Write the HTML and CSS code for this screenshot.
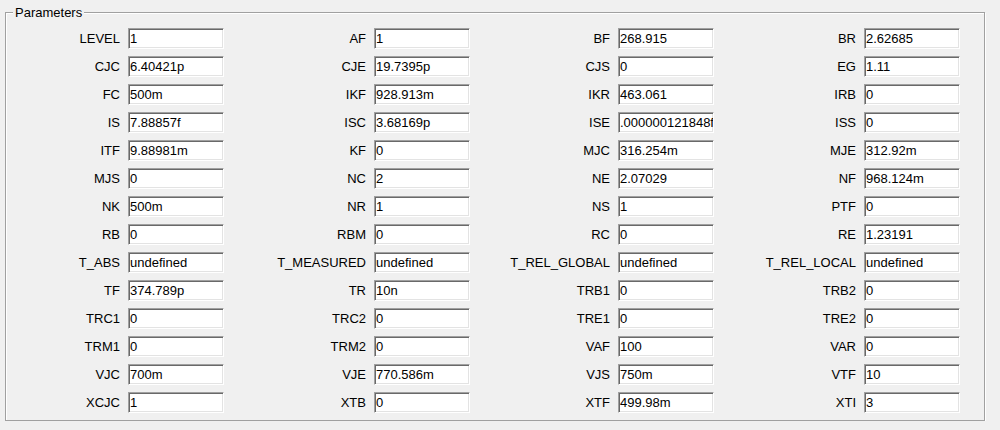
FILE: index.html
```html
<!DOCTYPE html>
<html lang="en">
<head>
<meta charset="UTF-8" />
<title>Parameters</title>
<link rel="stylesheet" href="styles.css">
</head>
<body>
  <div class="group">
    <span class="legend">Parameters</span>
    <div class="params">
      <label>LEVEL</label><input value="1">
      <label>AF</label><input value="1">
      <label>BF</label><input value="268.915">
      <label>BR</label><input value="2.62685">

      <label>CJC</label><input value="6.40421p">
      <label>CJE</label><input value="19.7395p">
      <label>CJS</label><input value="0">
      <label>EG</label><input value="1.11">

      <label>FC</label><input value="500m">
      <label>IKF</label><input value="928.913m">
      <label>IKR</label><input value="463.061">
      <label>IRB</label><input value="0">

      <label>IS</label><input value="7.88857f">
      <label>ISC</label><input value="3.68169p">
      <label>ISE</label><input value=".000000121848f">
      <label>ISS</label><input value="0">

      <label>ITF</label><input value="9.88981m">
      <label>KF</label><input value="0">
      <label>MJC</label><input value="316.254m">
      <label>MJE</label><input value="312.92m">

      <label>MJS</label><input value="0">
      <label>NC</label><input value="2">
      <label>NE</label><input value="2.07029">
      <label>NF</label><input value="968.124m">

      <label>NK</label><input value="500m">
      <label>NR</label><input value="1">
      <label>NS</label><input value="1">
      <label>PTF</label><input value="0">

      <label>RB</label><input value="0">
      <label>RBM</label><input value="0">
      <label>RC</label><input value="0">
      <label>RE</label><input value="1.23191">

      <label>T_ABS</label><input value="undefined">
      <label>T_MEASURED</label><input value="undefined">
      <label>T_REL_GLOBAL</label><input value="undefined">
      <label>T_REL_LOCAL</label><input value="undefined">

      <label>TF</label><input value="374.789p">
      <label>TR</label><input value="10n">
      <label>TRB1</label><input value="0">
      <label>TRB2</label><input value="0">

      <label>TRC1</label><input value="0">
      <label>TRC2</label><input value="0">
      <label>TRE1</label><input value="0">
      <label>TRE2</label><input value="0">

      <label>TRM1</label><input value="0">
      <label>TRM2</label><input value="0">
      <label>VAF</label><input value="100">
      <label>VAR</label><input value="0">

      <label>VJC</label><input value="700m">
      <label>VJE</label><input value="770.586m">
      <label>VJS</label><input value="750m">
      <label>VTF</label><input value="10">

      <label>XCJC</label><input value="1">
      <label>XTB</label><input value="0">
      <label>XTF</label><input value="499.98m">
      <label>XTI</label><input value="3">
    </div>
  </div>
</body>
</html>
```

FILE: styles.css
```css
html, body {
  margin: 0;
  padding: 0;
  background: #f0f0f0;
  font-family: "Liberation Sans", Arial, sans-serif;
  font-size: 13px;
  color: #000;
}
.group {
  position: relative;
  box-sizing: border-box;
  width: 980px;
  height: 409px;
  margin: 12px 0 0 5px;
  padding: 15px 0 7px 7px;
  border: 1px solid #a0a0a0;
  box-shadow: inset 1px 1px 0 #fff, 1px 1px 0 #fff;
}
.legend {
  position: absolute;
  top: -8px;
  left: 7px;
  padding: 0 2px;
  background: #f0f0f0;
  line-height: 15px;
}
.params {
  display: grid;
  grid-template-columns: 107px 96px 134px 96px 132px 96px 134px 96px;
  grid-auto-rows: 21px;
  column-gap: 8px;
  row-gap: 7px;
  align-items: center;
}
.params label {
  text-align: right;
  white-space: nowrap;
}
.params input {
  box-sizing: border-box;
  width: 96px;
  height: 21px;
  margin: 0;
  padding: 0 0 0 1px;
  font: inherit;
  color: #000;
  background: #fff;
  border: 1px solid;
  border-color: #a0a0a0 #fff #fff #a0a0a0;
  box-shadow: inset 1px 1px 0 #696969, inset -1px -1px 0 #e3e3e3;
  outline: none;
}
```
